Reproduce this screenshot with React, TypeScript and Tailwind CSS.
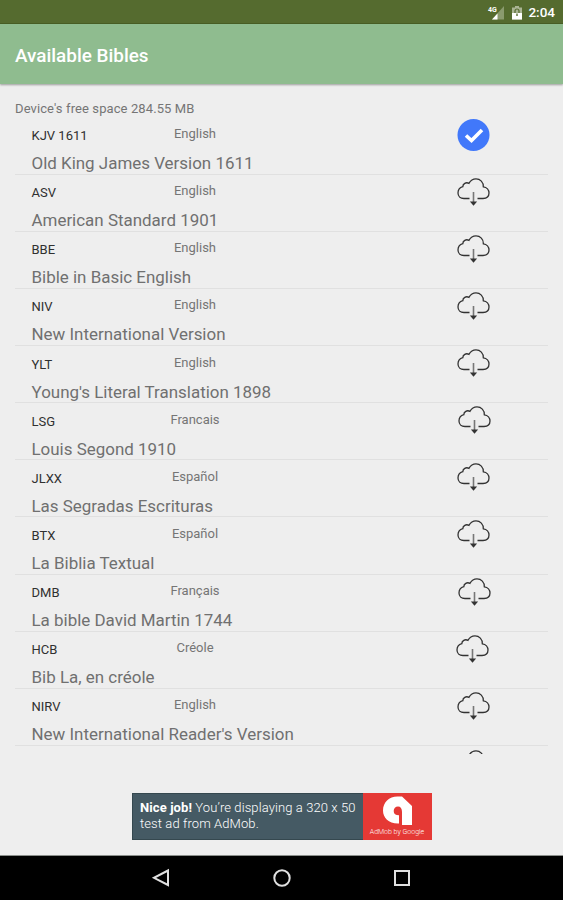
import React from 'react';

const bibles = [
  { code: 'KJV 1611', language: 'English', name: 'Old King James Version 1611', icon: 'ml-[442px]', downloaded: true },
  { code: 'ASV', language: 'English', name: 'American Standard 1901', icon: 'ml-[442px]' },
  { code: 'BBE', language: 'English', name: 'Bible in Basic English', icon: 'ml-[442px]' },
  { code: 'NIV', language: 'English', name: 'New International Version', icon: 'ml-[442px]' },
  { code: 'YLT', language: 'English', name: "Young's Literal Translation 1898", icon: 'ml-[442px]' },
  { code: 'LSG', language: 'Francais', name: 'Louis Segond 1910', icon: 'ml-[443px]' },
  { code: 'JLXX', language: 'Español', name: 'Las Segradas Escrituras', icon: 'ml-[442px]' },
  { code: 'BTX', language: 'Español', name: 'La Biblia Textual', icon: 'ml-[442px]' },
  { code: 'DMB', language: 'Français', name: 'La bible David Martin 1744', icon: 'ml-[443px]' },
  { code: 'HCB', language: 'Créole', name: 'Bib La, en créole', icon: 'ml-[441px]' },
  { code: 'NIRV', language: 'English', name: "New International Reader's Version", icon: 'ml-[442px]' },
];

const CheckIcon = () => (
  <svg className="h-8 w-[33px]" viewBox="0 0 33 32" fill="none">
    <circle cx="16.5" cy="16" r="16" fill="#4178fa" />
    <path d="M9 16.5l5.5 5 10.5-10.5" stroke="#fff" strokeWidth="3.6" />
  </svg>
);

const CloudIcon = () => (
  <svg className="h-8 w-[33px]" viewBox="0 0 33 32" fill="none" stroke="#333" strokeWidth="1.3">
    <path d="M12.5 22.5H7C3.3 22.5 1 20.1 1 17C1 13.8 2.8 11.6 5.8 10.7C5.8 7.6 9 5.9 12 7.3C13.5 4.5 16 2.9 19 2.9C23.2 2.9 26.6 6.3 26.3 10.8C29.8 11.3 32 14 32 17C32 20.1 29.6 22.3 26 22.5H20.5" />
    <path d="M16.5 16V27.5" stroke="#777" strokeWidth="1.6" />
    <path d="M12.9 25.6h7.2l-3.6 4.2z" fill="#333" stroke="none" />
  </svg>
);

const StatusBar = () => (
  <div className="flex h-6 items-center justify-end border-b border-[#496025] bg-[#556b2f] pr-[8px] text-white">
    <svg className="mr-[7px] h-5 w-[18px]" viewBox="0 0 18 20">
      <path d="M17 4v13.5H5z" fill="#8a9a6e" />
      <path d="M10.5 11.5V17.5H5z" fill="#fff" />
      <text x="1" y="9.5" fontSize="7" fontWeight="700" fill="#fff" fontFamily="Roboto, sans-serif">4G</text>
    </svg>
    <svg className="mr-[6px] h-5 w-[10px]" viewBox="0 0 10 20">
      <path d="M3 4h4v1.5h3V17.5H0V5.5h3z" fill="#aab494" />
      <path d="M0 11h10v6.5H0z" fill="#fff" />
      <path d="M3 11V9a2 2 0 0 1 4 0v2" fill="none" stroke="#556b2f" strokeWidth="1.2" />
      <path d="M4.3 11.5h1.4V14H4.3z" fill="#556b2f" />
    </svg>
    <span className="pt-px text-[13.5px] leading-5 font-medium">2:04</span>
  </div>
);

const AdBanner = () => (
  <div className="mx-auto flex h-[47px] w-[300px] border border-[#35484f] bg-[#455a64]">
    <div className="w-[230px] pt-[6px] pl-[7.5px] text-[13px] leading-4 font-light tracking-[0.1px] whitespace-nowrap text-white">
      <p><span className="font-bold">Nice job!</span> You’re displaying a 320 x 50</p>
      <p>test ad from AdMob.</p>
    </div>
    <div className="-my-px -mr-px flex w-[69px] flex-col items-center bg-[#e53935] pt-[3px]">
      <svg className="h-[31px] w-[29px]" viewBox="0 0 29 31">
        <path
          d="M14.5 0.5H19L29 10V29H19V16C19 12.5 17.6 10.5 15 10.5C12.5 10.5 10.7 12.5 10.7 15C10.7 18 12.5 19.3 16 19.3V27.5C6 28 0 22 0 14.5C0 6.5 6 0.5 14.5 0.5z"
          fill="#fff"
        />
      </svg>
      <span className="mt-px text-[7px] leading-[9px] font-light whitespace-nowrap text-white">AdMob by Google</span>
    </div>
  </div>
);

const App = () => {
  return (
    <div
      className="flex h-[900px] w-[563px] flex-col overflow-hidden bg-[#eeeeee]"
      style={{ fontFamily: 'Roboto, sans-serif' }}
    >
      <StatusBar />
      <header className="flex h-[60px] items-center bg-[#8fbc8f] pt-[3px] pl-[15px] shadow-[0_1px_2px_rgba(0,0,0,0.35)]">
        <h1 className="text-[18.9px] leading-6 font-medium text-white">Available Bibles</h1>
      </header>

      {/* Bible list */}
      <main className="px-[15px] pt-4">
        <p className="h-[17px] text-[13px] leading-[18px] tracking-[0.1px] text-[#757575]">Device's free space 284.55 MB</p>
        <div className="h-[637px] overflow-hidden pt-[0.5px]">
          {bibles.map((bible) => (
            <div key={bible.code} className="h-[57.15px] border-b border-[#e0e0e0]">
              <div className="grid h-[34.5px] grid-cols-1 [&>*]:col-start-1 [&>*]:row-start-1">
                <span className="pt-[9.5px] pl-[16.5px] text-[13px] leading-[18px] text-[#303030]">{bible.code}</span>
                <span className="ml-[140px] w-20 pt-[7.5px] text-center text-[13px] leading-[18px] text-[#757575]">{bible.language}</span>
                <div className={bible.icon + ' pt-px'}>{bible.downloaded ? <CheckIcon /> : <CloudIcon />}</div>
              </div>
              <p className="pl-[16.5px] text-[16.95px] leading-[23px] whitespace-nowrap text-[#707070]">{bible.name}</p>
            </div>
          ))}
          <div className="ml-[442px] pt-[2px]"><CloudIcon /></div>
        </div>
      </main>

      <div className="mt-auto mb-[15px]">
        <AdBanner />
      </div>

      {/* Navigation bar */}
      <nav className="grid h-[45px] grid-cols-[162px_120px_120px] border-t border-[#8b8f8b] bg-black">
        <svg className="mt-3 -mr-[9px] h-5 w-5 justify-self-end" viewBox="0 0 20 20" fill="none" stroke="#e0e0e0" strokeWidth="2">
          <path d="M17 2.5V17L3 9.8z" />
        </svg>
        <svg className="mt-3 -mr-[10px] h-5 w-5 justify-self-end" viewBox="0 0 20 20" fill="none" stroke="#e0e0e0" strokeWidth="2">
          <circle cx="10" cy="10" r="7.7" />
        </svg>
        <svg className="mt-3 -mr-[10px] h-5 w-5 justify-self-end" viewBox="0 0 20 20" fill="none" stroke="#e0e0e0" strokeWidth="2">
          <rect x="3" y="3" width="14" height="14" />
        </svg>
      </nav>
    </div>
  );
};

export default App;
